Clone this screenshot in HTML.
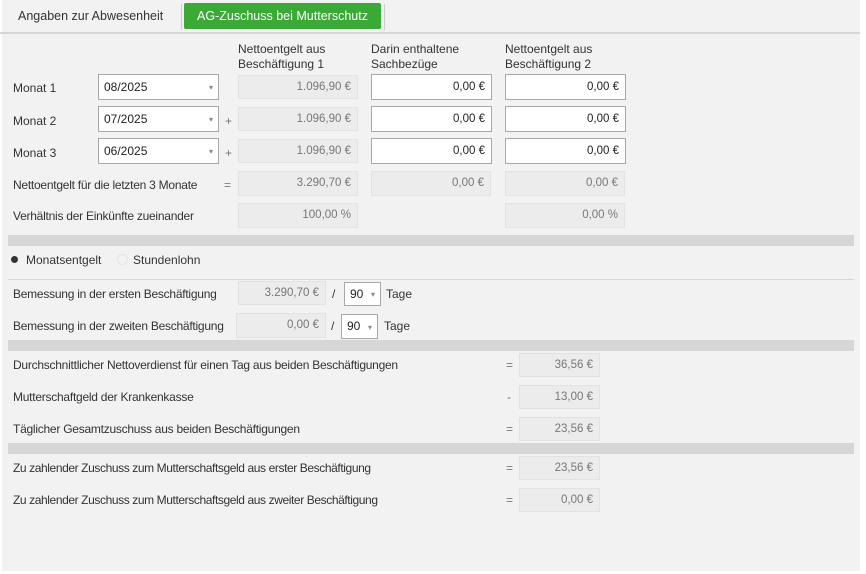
<!DOCTYPE html>
<html><head><meta charset="utf-8"><style>
*{box-sizing:border-box;margin:0;padding:0}
body{width:866px;height:574px;background:#fff;font-family:"Liberation Sans",sans-serif;font-size:12px;color:#333;position:relative;overflow:hidden}
#p{position:absolute;left:2px;top:0;width:858px;height:571px;background:#f2f2f2}
.a{position:absolute;white-space:nowrap}
.g{position:absolute;background:#ececec;border:1px solid #e2e2e2;color:#777;text-align:right;padding-right:6px;line-height:22px;font-size:11.5px}
.w{position:absolute;background:#fff;border:1px solid #a8a8a8;color:#222;text-align:right;padding-right:6px;line-height:24px;font-size:11.5px}
.c{position:absolute;background:#fff;border:1px solid #a8a8a8;color:#222;padding-left:5px;line-height:24px;font-size:12px}
.c:after{content:"▾";position:absolute;right:5px;top:1px;font-size:8px;color:#888}
.bar{position:absolute;left:8px;width:846px;height:11px;background:#d6d6d6}
.n{letter-spacing:-0.25px}
</style></head><body>
<div id="p"></div>
<div class="a" style="left:18px;top:9px;font-size:12.5px;color:#333">Angaben zur Abwesenheit</div>
<div style="position:absolute;left:181px;top:4px;width:1px;height:26px;background:#ccc"></div>
<div class="a" style="left:184px;top:3px;width:197px;height:26px;background:#3aa935;border-radius:2px;color:#fff;font-size:12.5px;text-align:center;line-height:26px">AG-Zuschuss bei Mutterschutz</div>
<div style="position:absolute;left:384px;top:4px;width:1px;height:26px;background:#ccc"></div>
<div style="position:absolute;left:0;top:32px;width:860px;height:2px;background:#d6d6d6"></div>

<div class="a" style="left:238px;top:42px;line-height:15px">Nettoentgelt aus<br>Beschäftigung 1</div>
<div class="a" style="left:371px;top:42px;line-height:15px">Darin enthaltene<br>Sachbezüge</div>
<div class="a" style="left:505px;top:42px;line-height:15px">Nettoentgelt aus<br>Beschäftigung 2</div>

<div class="a" style="left:13px;top:81px">Monat 1</div>
<div class="c" style="left:98px;top:74px;width:121px;height:26px">08/2025</div>
<div class="g" style="left:238px;top:75px;width:120px;height:24px">1.096,90 €</div>
<div class="w" style="left:371px;top:74px;width:121px;height:26px">0,00 €</div>
<div class="w" style="left:505px;top:74px;width:121px;height:26px">0,00 €</div>

<div class="a" style="left:13px;top:114px">Monat 2</div>
<div class="c" style="left:98px;top:106px;width:121px;height:26px">07/2025</div>
<div class="a" style="left:225px;top:114px;color:#777">+</div>
<div class="g" style="left:238px;top:107px;width:120px;height:24px">1.096,90 €</div>
<div class="w" style="left:371px;top:106px;width:121px;height:26px">0,00 €</div>
<div class="w" style="left:505px;top:106px;width:121px;height:26px">0,00 €</div>

<div class="a" style="left:13px;top:146px">Monat 3</div>
<div class="c" style="left:98px;top:138px;width:121px;height:26px">06/2025</div>
<div class="a" style="left:225px;top:146px;color:#777">+</div>
<div class="g" style="left:238px;top:139px;width:120px;height:24px">1.096,90 €</div>
<div class="w" style="left:371px;top:138px;width:121px;height:26px">0,00 €</div>
<div class="w" style="left:505px;top:138px;width:121px;height:26px">0,00 €</div>

<div class="a n" style="left:13px;top:178px">Nettoentgelt für die letzten 3 Monate</div>
<div class="a" style="left:224px;top:178px;color:#777">=</div>
<div class="g" style="left:238px;top:171px;width:120px;height:25px">3.290,70 €</div>
<div class="g" style="left:371px;top:171px;width:120px;height:25px">0,00 €</div>
<div class="g" style="left:505px;top:171px;width:120px;height:25px">0,00 €</div>

<div class="a n" style="left:13px;top:209px">Verhältnis der Einkünfte zueinander</div>
<div class="g" style="left:238px;top:203px;width:120px;height:25px">100,00 %</div>
<div class="g" style="left:505px;top:203px;width:120px;height:25px">0,00 %</div>

<div class="bar" style="top:235px"></div>
<div style="position:absolute;left:11px;top:256px;width:7px;height:7px;border-radius:50%;background:#333"></div>
<div class="a" style="left:26px;top:253px">Monatsentgelt</div>
<div style="position:absolute;left:117px;top:254px;width:11px;height:11px;border-radius:50%;border:1px solid #e4e4e4;background:#f2f2f2"></div>
<div class="a" style="left:133px;top:253px">Stundenlohn</div>
<div style="position:absolute;left:8px;top:279px;width:846px;height:1px;background:#d6d6d6"></div>

<div class="a n" style="left:13px;top:287px">Bemessung in der ersten Beschäftigung</div>
<div class="g" style="left:238px;top:281px;width:88px;height:24px">3.290,70 €</div>
<div class="a" style="left:332px;top:287px">/</div>
<div class="c" style="left:344px;top:282px;width:37px;height:24px;line-height:22px">90</div>
<div class="a" style="left:386px;top:287px">Tage</div>

<div class="a n" style="left:13px;top:319px">Bemessung in der zweiten Beschäftigung</div>
<div class="g" style="left:236px;top:313px;width:90px;height:25px">0,00 €</div>
<div class="a" style="left:331px;top:319px">/</div>
<div class="c" style="left:341px;top:314px;width:37px;height:25px;line-height:23px">90</div>
<div class="a" style="left:384px;top:319px">Tage</div>

<div class="bar" style="top:340px"></div>

<div class="a n" style="left:13px;top:358px">Durchschnittlicher Nettoverdienst für einen Tag aus beiden Beschäftigungen</div>
<div class="a" style="left:506px;top:358px;color:#777">=</div>
<div class="g" style="left:519px;top:353px;width:81px;height:24px">36,56 €</div>

<div class="a n" style="left:13px;top:390px">Mutterschaftgeld der Krankenkasse</div>
<div class="a" style="left:507px;top:390px;color:#777">-</div>
<div class="g" style="left:519px;top:385px;width:81px;height:24px">13,00 €</div>

<div class="a n" style="left:13px;top:422px">Täglicher Gesamtzuschuss aus beiden Beschäftigungen</div>
<div class="a" style="left:506px;top:422px;color:#777">=</div>
<div class="g" style="left:519px;top:417px;width:81px;height:24px">23,56 €</div>

<div class="bar" style="top:443px"></div>

<div class="a" style="left:13px;top:461px;letter-spacing:-0.4px">Zu zahlender Zuschuss zum Mutterschaftsgeld aus erster Beschäftigung</div>
<div class="a" style="left:506px;top:461px;color:#777">=</div>
<div class="g" style="left:519px;top:456px;width:81px;height:24px">23,56 €</div>

<div class="a" style="left:13px;top:493px;letter-spacing:-0.4px">Zu zahlender Zuschuss zum Mutterschaftsgeld aus zweiter Beschäftigung</div>
<div class="a" style="left:506px;top:493px;color:#777">=</div>
<div class="g" style="left:519px;top:488px;width:81px;height:24px">0,00 €</div>
</body></html>
